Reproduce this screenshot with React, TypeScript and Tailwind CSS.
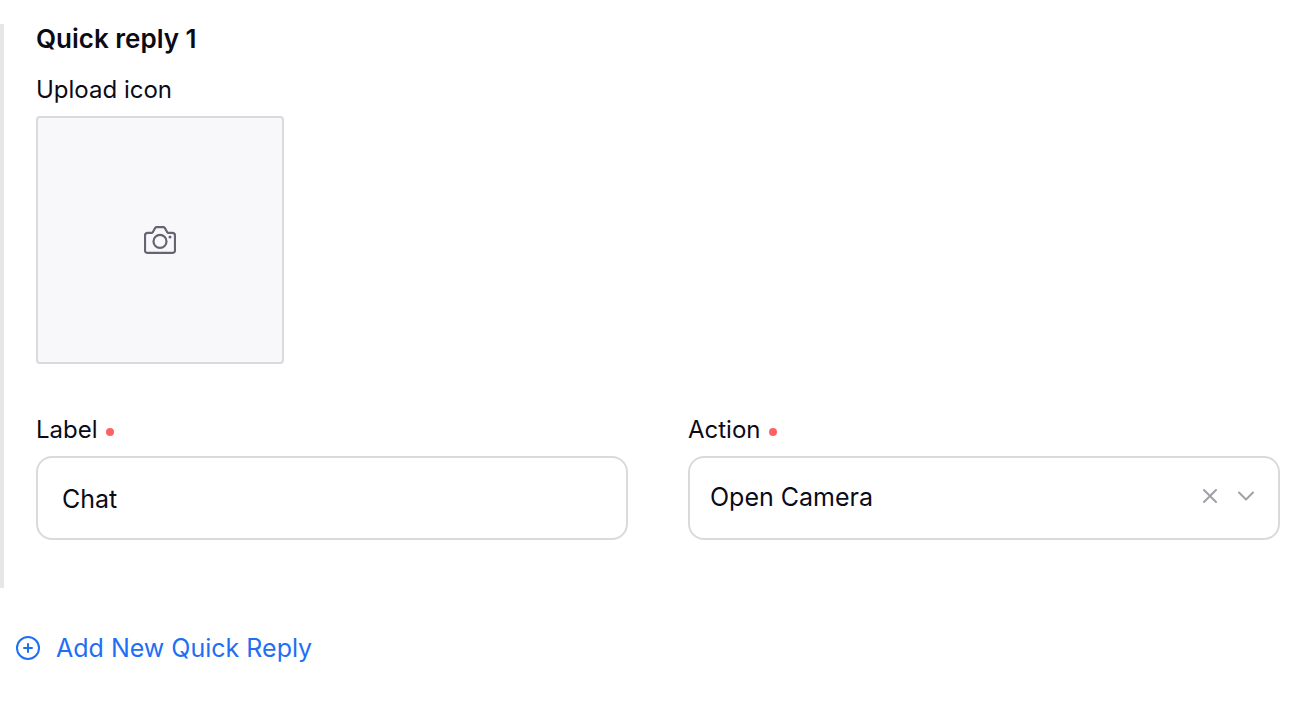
import { useState, type ReactNode } from "react";

const fieldClass =
  "h-21 w-full rounded-2xl border-2 border-[#dadadb] bg-white text-[25px] text-[#0b0b16] outline-none focus:border-[#1f6ff5]";

function FieldLabel({ htmlFor, children }: { htmlFor: string; children: ReactNode }) {
  return (
    <label htmlFor={htmlFor} className="flex items-center gap-2 text-2xl leading-8">
      {children}
      <span className="mt-1 size-2 rounded-full bg-[#ff6265]" aria-hidden="true" />
    </label>
  );
}

function CameraIcon() {
  return (
    <svg width="32" height="28" viewBox="0 0 32 28" fill="none" stroke="#656472" strokeWidth="2.2" strokeLinejoin="round">
      <path d="M3.500 6.900h4c.6 0 1-.2 1.300-.7l2.300-4.200c.4-.6.8-.9 1.500-.9h6.800c.7 0 1.100.3 1.500.9l2.300 4.200c.3.500.7.700 1.300.700h4A2.500 2.500 0 0 1 31 9.400v15A2.500 2.500 0 0 1 28.500 26.900h-25A2.500 2.500 0 0 1 1 24.400v-15A2.500 2.500 0 0 1 3.500 6.900Z" />
      <circle cx="16" cy="15.400" r="6.500" />
      <circle cx="26" cy="11" r="1.500" fill="#656472" stroke="none" />
    </svg>
  );
}

export default function App() {
  const [label, setLabel] = useState("Chat");
  const [action, setAction] = useState("camera");

  return (
    <main className="min-h-screen bg-white py-6 font-['Inter',sans-serif] text-[#0b0b16]">
      <section className="border-l-4 border-[#e6e6e8] pr-4.5 pb-12 pl-8">
        <h2 className="mb-5 text-[26px] leading-[30px] font-semibold">Quick reply 1</h2>

        <p className="mb-2.5 text-2xl leading-8">Upload icon</p>
        <label className="relative flex size-62 cursor-pointer items-center justify-center rounded border-2 border-[#dadadb] bg-[#f8f8fb]">
          <input type="file" accept="image/*" aria-label="Upload icon" className="sr-only" />
          <CameraIcon />
        </label>

        <div className="mt-[50px] grid grid-cols-2 gap-15">
          <div className="flex flex-col gap-2.5">
            <FieldLabel htmlFor="reply-label">Label</FieldLabel>
            <input
              id="reply-label"
              type="text"
              value={label}
              onChange={(e) => setLabel(e.target.value)}
              className={`${fieldClass} px-6 pt-0.5`}
            />
          </div>

          <div className="flex flex-col gap-2.5">
            <FieldLabel htmlFor="reply-action">Action</FieldLabel>
            <div className="relative">
              <select
                id="reply-action"
                value={action}
                onChange={(e) => setAction(e.target.value)}
                className={`${fieldClass} appearance-none pr-24 pl-5`}
              >
                <option value="" />
                <option value="camera">Open Camera</option>
              </select>
              {/* clear + chevron sit over the select */}
              <div className="pointer-events-none absolute inset-y-0 right-6 flex items-center gap-4 pb-1 text-[#a09fa6]">
                <button
                  type="button"
                  aria-label="Clear action"
                  onClick={() => setAction("")}
                  className="pointer-events-auto cursor-pointer"
                >
                  <svg width="20" height="20" viewBox="0 0 20 20" fill="none" stroke="currentColor" strokeWidth="2" strokeLinecap="round">
                    <path d="m4 4 12 12M16 4 4 16" />
                  </svg>
                </button>
                <svg width="20" height="20" viewBox="0 0 20 20" fill="none" stroke="currentColor" strokeWidth="2" strokeLinecap="round" strokeLinejoin="round">
                  <path d="m3 6.5 7 7 7-7" />
                </svg>
              </div>
            </div>
          </div>
        </div>
      </section>

      <button
        type="button"
        className="mt-11 ml-4 flex cursor-pointer items-center gap-4 text-[25px] leading-8 text-[#1f6ff5]"
      >
        <svg width="24" height="24" viewBox="0 0 24 24" fill="none" stroke="currentColor" strokeWidth="2" strokeLinecap="round">
          <circle cx="12" cy="12" r="11" />
          <path d="M12 8v8M8 12h8" />
        </svg>
        Add New Quick Reply
      </button>
    </main>
  );
}
